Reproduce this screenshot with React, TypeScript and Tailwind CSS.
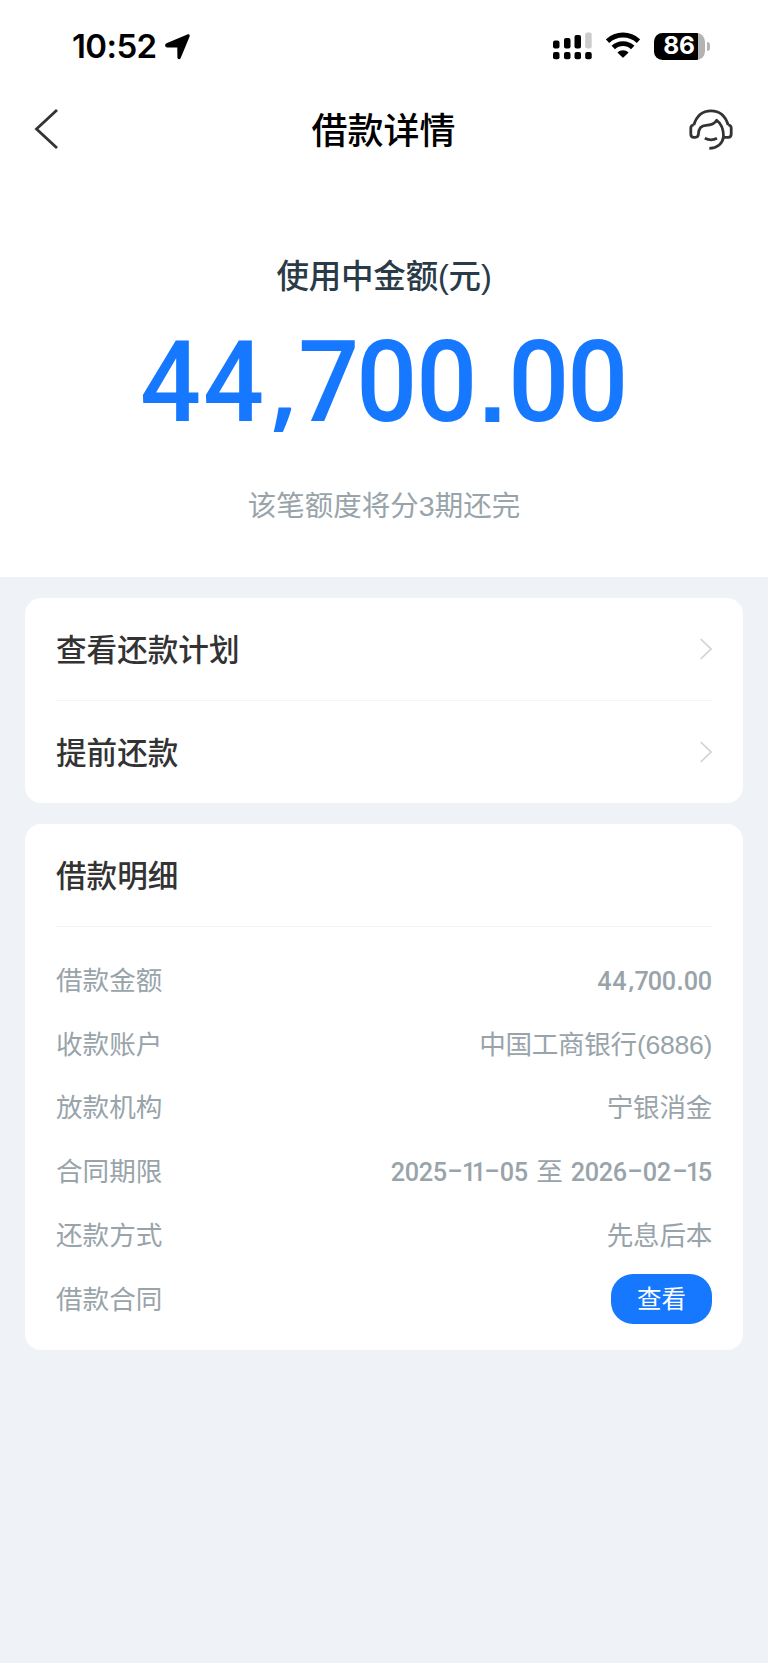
import React from "react";
import clsx from "clsx";

interface IDetail {
  label: string;
  value: string;
  latin?: boolean;
}

const actions: string[] = ["查看还款计划", "提前还款"];

const details: IDetail[] = [
  { label: "借款金额", value: "44,700.00", latin: true },
  { label: "收款账户", value: "中国工商银行(6886)" },
  { label: "放款机构", value: "宁银消金" },
  { label: "合同期限", value: "2025-11-05 至 2026-02-15", latin: true },
  { label: "还款方式", value: "先息后本" },
];

// Advance width and face for the characters that differ from a normal digit.
const glyphStyles: Record<string, string> = {
  "1": "w-[0.38em] scale-x-[0.92]",
  "4": "w-[0.558em] scale-x-95",
  "7": "w-[0.493em] scale-x-95",
  ",": "w-[0.32em] pl-[0.02em] font-['Noto_Sans'] font-semibold scale-[0.88] -translate-y-[0.06em] origin-[50%_78%]",
  ".": "w-[0.29em] font-['Liberation_Sans'] font-bold scale-[0.87] origin-[50%_78%]",
  "-": "w-[0.31em] mx-[0.155em] scale-x-[1.7] -translate-y-[0.06em]",
};

/**
 * Narrow numerals, every character in a box of its own width.
 */
const Numerals = ({ text }: { text: string }): React.JSX.Element => {
  return (
    <span className="inline-flex font-['Roboto'] font-medium">
      {text.split("").map((char: string, index: number) => {
        return (
          <span
            key={index}
            className={clsx("flex justify-center", glyphStyles[char] ?? "w-[0.527em] scale-x-95")}
          >
            {char}
          </span>
        );
      })}
    </span>
  );
};

/**
 * Phone status bar: time, signal, wifi and battery.
 */
const StatusBar = (): React.JSX.Element => {
  return (
    <div className="flex h-[92px] items-center justify-between pr-[58px] pl-[72px]">
      <div className="flex items-center gap-2 pt-px">
        <span className="font-['Inter'] text-[33px] leading-none font-semibold tracking-[-0.6px] text-black">
          10:52
        </span>
        <svg width="25" height="26" viewBox="0 0 25 26">
          <path
            d="M1.500 9.200 22.300.5c1.700-.7 2.900.5 2.200 2.200L15.700 23.900c-.9 2.100-3.300 1.500-3.300-.7L12.300 13.500 2.200 13.400C-.2 13.400-.6 10.100 1.500 9.200Z"
            fill="#000"
          />
        </svg>
      </div>
      <div className="flex items-center">
        {/* Dual sim signal. */}
        <svg width="39" height="28" viewBox="0 0 39 28">
          <rect x="0" y="8.500" width="6.500" height="8" rx="2" />
          <rect x="11" y="6" width="6.500" height="10.500" rx="2" />
          <rect x="21.500" y="3" width="6.500" height="13.500" rx="2" />
          <rect x="32.200" y="0.500" width="6.500" height="16" rx="2" fill="#ccc" />
          <rect x="0" y="20" width="6.500" height="7.300" rx="2" />
          <rect x="11" y="20" width="6.500" height="7.300" rx="2" />
          <rect x="21.500" y="20" width="6.500" height="7.300" rx="2" />
          <rect x="32.200" y="20" width="6.500" height="7.300" rx="2" />
        </svg>
        <svg className="ml-3.5" width="34" height="28" viewBox="0 0 34 28">
          <g fill="none" stroke="#000" strokeWidth="4.900">
            <path d="M1.500 9.200a22.500 22.500 0 0 1 31 0" />
            <path d="M7.300 15.600a13.900 13.900 0 0 1 19.400 0" />
          </g>
          <path d="M11.400 20.600a7.800 7.800 0 0 1 11.200 0L17.700 25.300a1 1 0 0 1-1.400 0Z" />
        </svg>
        <div className="ml-3.5 flex items-center">
          <div className="flex h-[27px] w-[51px] items-center justify-center rounded-[8.500px] bg-linear-to-r from-black from-86% to-[#b3b3b3] to-86% pr-px pb-px">
            <span className="font-['Inter'] text-[24.500px] leading-none font-bold tracking-[-0.300px] text-white">
              86
            </span>
          </div>
          <div className="ml-0.5 h-[9px] w-[3px] rounded-r-full bg-[#b3b3b3]" />
        </div>
      </div>
    </div>
  );
};

/**
 * Title bar with the back arrow and the customer service icon.
 */
const Header = (): React.JSX.Element => {
  return (
    <header className="flex h-[75px] items-center justify-between pr-[35px] pl-[34px]">
      <svg className="-mt-px" width="44" height="40" viewBox="0 0 44 40">
        <path d="M23 1 2.500 20 23 39" fill="none" stroke="#333" strokeWidth="2.800" />
      </svg>
      <h1 className="pt-1 text-[36px] leading-none font-medium text-black">借款详情</h1>
      <svg
        width="44"
        height="42"
        viewBox="0 0 44 42"
        fill="none"
        stroke="#333"
        strokeWidth="2.800"
        strokeLinejoin="round"
      >
        <path d="M4.800 16C7.500 7 13.800 1.800 22 1.800S36.500 7 39.200 16" />
        <path d="M4.800 16H4.300Q1.800 16.500 1.800 19V25Q1.800 28.300 4.800 28.300H6.300Q9.300 28.300 9.400 25C9.800 18.500 12.500 16.300 17 16.300 22 16.300 25.500 15 27.700 11.300 32.500 14.500 34.600 20 34.600 28.300H39.200Q42.200 28.300 42.200 25V19Q42.200 16.500 39.700 16H39.200" />
        <path d="M34.600 27.500C33.500 34.500 28.500 39.300 20.300 39.300" />
        <path d="M15.800 29.300Q22 32.300 28 29.300" />
      </svg>
    </header>
  );
};

const Arrow = (): React.JSX.Element => {
  return (
    <svg width="13" height="22" viewBox="0 0 13 22">
      <path d="M1.700 1 12 11 1.700 21" fill="none" stroke="#d2d2d2" strokeWidth="1.700" />
    </svg>
  );
};

const App = (): React.JSX.Element => {
  return (
    <div className="min-h-[1663px] bg-[#eff2f7] font-['Liberation_Sans','Noto_Sans_CJK_SC',sans-serif]">
      <section className="h-[577px] bg-white">
        <StatusBar />
        <Header />
        {/* Outstanding amount. */}
        <div className="flex flex-col items-center pt-[93px]">
          <p className="text-[32.500px] leading-[34px] font-medium tracking-[-0.200px] text-[#2a3b47]">
            使用中金额(元)
          </p>
          <p className="mt-[22px] mr-px text-[113px] leading-[132px] text-[#1677ff]">
            <Numerals text="44,700.00" />
          </p>
          <p className="mt-10 text-[28.500px] leading-[34px] text-[#98a4aa]">
            该笔额度将分3期还完
          </p>
        </div>
      </section>

      <main className="flex flex-col gap-[21px] px-[25px] pt-[21px]">
        <section className="rounded-2xl bg-white px-[31px]">
          {actions.map((action: string, index: number) => {
            return (
              <div
                key={index}
                className={clsx(
                  "flex items-center justify-between",
                  index === 0 ? "h-[103px] border-b border-[#f3f4f5]" : "h-[102px]",
                )}
              >
                <span className="pt-[3px] text-[30.600px] leading-none font-medium text-[#333]">
                  {action}
                </span>
                <Arrow />
              </div>
            );
          })}
        </section>

        <section className="h-[526px] rounded-2xl bg-white px-[31px]">
          <h2 className="flex h-[103px] items-center border-b border-[#f3f4f5] pt-[3px] text-[30.600px] leading-none font-medium text-[#333]">
            借款明细
          </h2>
          <div className="pt-[22px] text-[26.600px] leading-none text-[#98a4aa]">
            {details.map((detail: IDetail, index: number) => {
              return (
                <div key={index} className="flex h-[63.700px] items-center justify-between pt-px">
                  <span>{detail.label}</span>
                  {detail.latin ? (
                    <span className="flex items-center gap-2">
                      {detail.value.split(" ").map((part: string, partIndex: number) => {
                        return /\d/.test(part) ? (
                          <Numerals key={partIndex} text={part} />
                        ) : (
                          <span key={partIndex}>{part}</span>
                        );
                      })}
                    </span>
                  ) : (
                    <span className="tracking-[-0.300px]">{detail.value}</span>
                  )}
                </div>
              );
            })}
            <div className="flex h-[63.700px] items-center justify-between">
              <span className="pt-0.5">借款合同</span>
              <button className="h-[50px] w-[101px] rounded-[22px] bg-[#1677ff] pt-0.5 text-[24.500px] leading-none text-white">
                查看
              </button>
            </div>
          </div>
        </section>
      </main>
    </div>
  );
};

export default App;
